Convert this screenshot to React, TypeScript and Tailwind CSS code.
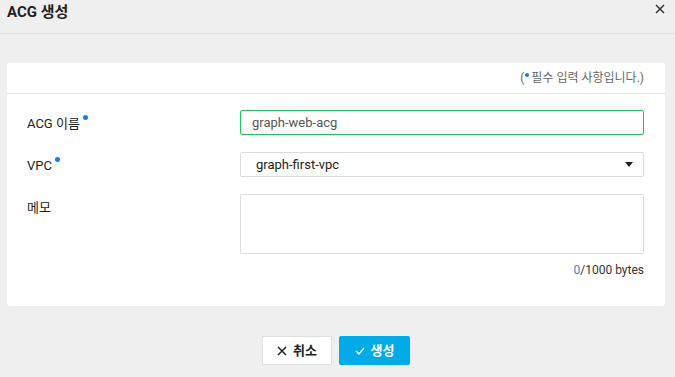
import React from "react";

const font = { fontFamily: "Roboto, 'Noto Sans CJK KR', sans-serif" };

const Dot = () => (
  <span className="ml-[3px] inline-block size-[5px] -translate-y-[6px] rounded-full bg-[#1a7fe0]" />
);

const App: React.FC = () => {
  return (
    <div className="h-[377px] w-[675px] overflow-hidden bg-[#efefef] text-[#222]" style={font}>
      <div className="flex h-[34px] items-start justify-between border-b border-[#dedede] pl-[7px] pr-[10px]">
        <h1 className="pt-[1px] text-[15px] leading-[22px] font-bold text-[#222]">ACG 생성</h1>
        <svg className="mt-[4px]" width="10" height="10" viewBox="0 0 10 10">
          <path d="M1 1L9 9M9 1L1 9" stroke="#333" strokeWidth="1.5" />
        </svg>
      </div>

      <div className="mt-[29px] mr-[10px] ml-[7px] h-[243px] rounded-[3px] bg-white">
        <div className="flex h-[31px] items-center justify-end border-b border-[#e6e6e6] pr-[21px] text-[12px] text-[#666]">
          (<span className="mr-[2px] ml-[1px] inline-block size-[4px] -translate-y-[3px] rounded-full bg-[#1a7fe0]" />필수 입력 사항입니다.)
        </div>

        <div className="grid grid-cols-[213px_1fr] gap-y-[17px] pt-[16px] pr-[21px] pl-[20px] text-[13px]">
          <div className="flex h-[25px] items-center pt-[2px]">
            ACG 이름<Dot />
          </div>
          <div className="flex h-[25px] items-center rounded-[2px] border border-[#25c35a] pl-[11px] text-[#555]">
            graph-web-acg
          </div>

          <div className="flex h-[25px] items-center pt-[2px]">
            VPC<Dot />
          </div>
          <div className="flex h-[25px] items-center justify-between rounded-[2px] border border-[#dcdcdc] pr-[10px] pl-[15px] text-[#222]">
            <span>graph-first-vpc</span>
            <svg width="8" height="5" viewBox="0 0 8 5">
              <path d="M0 0H8L4 5Z" fill="#222" />
            </svg>
          </div>

          <div className="flex h-[25px] items-center pt-[2px]">메모</div>
          <div>
            <div className="h-[60px] rounded-[2px] border border-[#dcdcdc]" />
            <div className="mt-[7px] text-right text-[12px] text-[#333]">
              <span className="text-[#2a8ae0]">0</span>/1000 bytes
            </div>
          </div>
        </div>
      </div>

      <div className="mt-[30px] flex justify-center gap-[7px] pr-[3px]">
        <button className="flex h-[29px] w-[70px] items-center justify-center gap-[6px] border border-[#e2e2e2] bg-white text-[13px] font-bold text-[#222]">
          <svg width="10" height="10" viewBox="0 0 10 10">
            <path d="M1 1L9 9M9 1L1 9" stroke="#222" strokeWidth="1.5" />
          </svg>
          취소
        </button>
        <button className="flex h-[29px] w-[71px] items-center justify-center gap-[6px] rounded-[2px] bg-[#00abe8] text-[13px] font-bold text-white">
          <svg width="10" height="8" viewBox="0 0 10 8">
            <path d="M1 4L4 7L9 1" stroke="#fff" strokeWidth="1.3" fill="none" />
          </svg>
          생성
        </button>
      </div>
    </div>
  );
};

export default App;
